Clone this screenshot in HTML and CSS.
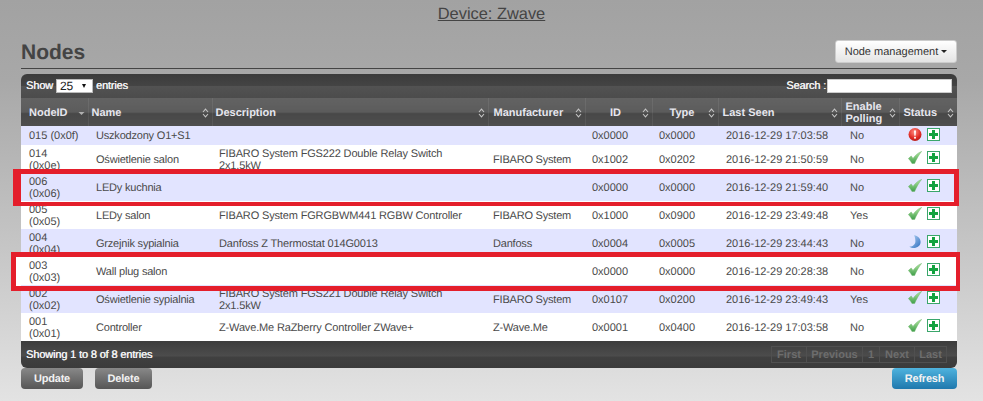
FILE: index.html
```html
<!DOCTYPE html>
<html lang="en">
<head>
  <meta charset="UTF-8" />
  <title>Device: Zwave</title>
  <link rel="stylesheet" href="styles.css">
</head>

<body>
  <svg class="sprites" width="0" height="0">
    <defs>
      <linearGradient id="g-check" x1="0" y1="0" x2="0" y2="1">
        <stop offset="0" stop-color="#b4e8a0" />
        <stop offset="1" stop-color="#3f9e4a" />
      </linearGradient>
      <radialGradient id="g-err" cx="0.45" cy="0.3" r="0.8">
        <stop offset="0" stop-color="#ff8a80" />
        <stop offset="0.6" stop-color="#e02b25" />
        <stop offset="1" stop-color="#a81512" />
      </radialGradient>
      <linearGradient id="g-moon" x1="0" y1="0" x2="1" y2="1">
        <stop offset="0" stop-color="#b9d6f5" />
        <stop offset="1" stop-color="#2f6fc0" />
      </linearGradient>
      <symbol id="i-check" viewBox="0 0 14 13">
        <path d="M0.4 7.5 L3.2 5 L5 7.4 C7 4.5 10 1.8 13.6 0.4 C11 3.5 8.5 8 6.6 12.6 L4 12.6 C3.2 10.8 2 9 0.4 7.5 Z" fill="url(#g-check)" stroke="#6db46d" stroke-width="0.5" />
      </symbol>
      <symbol id="i-plus" viewBox="0 0 13 13">
        <rect x="0.5" y="0.5" width="12" height="12" fill="#fff" stroke="#3aa66b" />
        <path d="M5 2 H8 V5 H11 V8 H8 V11 H5 V8 H2 V5 H5 Z" fill="#12a33f" />
      </symbol>
      <symbol id="i-error" viewBox="0 0 13 13">
        <circle cx="6.5" cy="6.5" r="6.5" fill="url(#g-err)" />
        <path d="M5.5 2.5 H7.5 L7.1 7.8 H5.9 Z" fill="#fff" />
        <rect x="5.6" y="8.8" width="1.8" height="1.8" fill="#fff" />
      </symbol>
      <symbol id="i-moon" viewBox="0 0 12 13">
        <path d="M5 0.3 C9 1 11.6 3.5 11.6 7 C11.6 10.5 8.5 13 4.5 13 C3 13 1.5 12.5 0.4 11.5 C3.5 11.8 6.4 9.5 6.4 6.5 C6.4 4 6 2 5 0.3 Z" fill="url(#g-moon)" />
      </symbol>
      <symbol id="i-sort" viewBox="0 0 7 10">
        <path d="M1 4 L3.5 1.2 L6 4 M1 6 L3.5 8.8 L6 6" fill="none" stroke="#c4c4c4" stroke-width="1.1" />
      </symbol>
      <symbol id="i-sort-down" viewBox="0 0 7 10">
        <path d="M0.5 4 H6.5 L3.5 7 Z" fill="#b0b0b0" />
      </symbol>
    </defs>
  </svg>

  <h2 class="device-title"><a href="#">Device: Zwave</a></h2>

  <div class="content">
    <div class="page-head">
      <h1>Nodes</h1>
      <button class="btn-menu">Node management <span class="caret"></span></button>
    </div>

    <div class="nodes-wrap">
      <div class="toolbar">
        <div class="length">
          Show
          <span class="select-wrap">
            <select>
              <option>25</option>
              <option>50</option>
              <option>100</option>
            </select>
          </span>
          entries
        </div>
        <label class="search">Search : <input type="text"></label>
      </div>

      <table class="nodes">
        <colgroup>
          <col class="c-node"><col class="c-name"><col class="c-desc"><col class="c-manu"><col class="c-id">
          <col class="c-type"><col class="c-seen"><col class="c-poll"><col class="c-status">
        </colgroup>
        <thead>
          <tr>
            <th class="first"><div class="th-in"><span>NodeID</span><svg class="sort"><use href="#i-sort-down" /></svg></div></th>
            <th class="tight"><div class="th-in"><span>Name</span><svg class="sort"><use href="#i-sort" /></svg></div></th>
            <th class="tight"><div class="th-in"><span>Description</span><svg class="sort"><use href="#i-sort" /></svg></div></th>
            <th class="manu"><div class="th-in"><span>Manufacturer</span><svg class="sort"><use href="#i-sort" /></svg></div></th>
            <th><div class="th-in"><span class="mid">ID</span><svg class="sort"><use href="#i-sort" /></svg></div></th>
            <th><div class="th-in"><span class="mid">Type</span><svg class="sort"><use href="#i-sort" /></svg></div></th>
            <th><div class="th-in"><span>Last Seen</span><svg class="sort"><use href="#i-sort" /></svg></div></th>
            <th><div class="th-in"><span>Enable Polling</span><svg class="sort"><use href="#i-sort" /></svg></div></th>
            <th><div class="th-in"><span>Status</span><svg class="sort"><use href="#i-sort" /></svg></div></th>
          </tr>
        </thead>
        <tbody>
          <tr class="odd short">
            <td class="one-line">015 (0x0f)</td><td class="name">Uszkodzony O1+S1</td><td class="desc"></td><td class="manu"></td><td>0x0000</td><td>0x0000</td>
            <td class="seen">2016-12-29 17:03:58</td><td class="poll">No</td>
            <td><div class="icons"><svg class="ic"><use href="#i-error" /></svg><svg class="plus"><use href="#i-plus" /></svg></div></td>
          </tr>
          <tr>
            <td>014 (0x0e)</td><td class="name">Oświetlenie salon</td><td class="desc">FIBARO System FGS222 Double Relay Switch 2x1.5kW</td><td class="manu">FIBARO System</td><td>0x1002</td><td>0x0202</td>
            <td class="seen">2016-12-29 21:50:59</td><td class="poll">No</td>
            <td><div class="icons"><svg class="ic"><use href="#i-check" /></svg><svg class="plus"><use href="#i-plus" /></svg></div></td>
          </tr>
          <tr class="odd">
            <td>006 (0x06)</td><td class="name">LEDy kuchnia</td><td class="desc"></td><td class="manu"></td><td>0x0000</td><td>0x0000</td>
            <td class="seen">2016-12-29 21:59:40</td><td class="poll">No</td>
            <td><div class="icons"><svg class="ic"><use href="#i-check" /></svg><svg class="plus"><use href="#i-plus" /></svg></div></td>
          </tr>
          <tr>
            <td>005 (0x05)</td><td class="name">LEDy salon</td><td class="desc">FIBARO System FGRGBWM441 RGBW Controller</td><td class="manu">FIBARO System</td><td>0x1000</td><td>0x0900</td>
            <td class="seen">2016-12-29 23:49:48</td><td class="poll">Yes</td>
            <td><div class="icons"><svg class="ic"><use href="#i-check" /></svg><svg class="plus"><use href="#i-plus" /></svg></div></td>
          </tr>
          <tr class="odd">
            <td>004 (0x04)</td><td class="name">Grzejnik sypialnia</td><td class="desc">Danfoss Z Thermostat 014G0013</td><td class="manu">Danfoss</td><td>0x0004</td><td>0x0005</td>
            <td class="seen">2016-12-29 23:44:43</td><td class="poll">No</td>
            <td><div class="icons"><svg class="ic"><use href="#i-moon" /></svg><svg class="plus"><use href="#i-plus" /></svg></div></td>
          </tr>
          <tr>
            <td>003 (0x03)</td><td class="name">Wall plug salon</td><td class="desc"></td><td class="manu"></td><td>0x0000</td><td>0x0000</td>
            <td class="seen">2016-12-29 20:28:38</td><td class="poll">No</td>
            <td><div class="icons"><svg class="ic"><use href="#i-check" /></svg><svg class="plus"><use href="#i-plus" /></svg></div></td>
          </tr>
          <tr class="odd">
            <td>002 (0x02)</td><td class="name">Oświetlenie sypialnia</td><td class="desc">FIBARO System FGS221 Double Relay Switch 2x1.5kW</td><td class="manu">FIBARO System</td><td>0x0107</td><td>0x0200</td>
            <td class="seen">2016-12-29 23:49:43</td><td class="poll">Yes</td>
            <td><div class="icons"><svg class="ic"><use href="#i-check" /></svg><svg class="plus"><use href="#i-plus" /></svg></div></td>
          </tr>
          <tr>
            <td>001 (0x01)</td><td class="name">Controller</td><td class="desc">Z-Wave.Me RaZberry Controller ZWave+</td><td class="manu">Z-Wave.Me</td><td>0x0001</td><td>0x0400</td>
            <td class="seen">2016-12-29 17:03:58</td><td class="poll">No</td>
            <td><div class="icons"><svg class="ic"><use href="#i-check" /></svg><svg class="plus"><use href="#i-plus" /></svg></div></td>
          </tr>
        </tbody>
      </table>

      <div class="table-foot">
        <div class="info">Showing 1 to 8 of 8 entries</div>
        <div class="pager">
          <a class="w-first">First</a><a class="w-prev">Previous</a><a class="w-one">1</a><a class="w-next">Next</a><a class="w-last">Last</a>
        </div>
      </div>

      <!-- hand drawn marks that sit on top of the screenshot -->
      <div class="mark mark-one"></div>
      <div class="mark mark-two"></div>
    </div>

    <div class="actions">
      <button class="btn btn-update">Update</button>
      <button class="btn btn-delete">Delete</button>
      <button class="btn btn-refresh">Refresh</button>
    </div>
  </div>
</body>
</html>
```

FILE: styles.css
```css
* {
  box-sizing: border-box;
  margin: 0;
  padding: 0;
  font-family: "Liberation Sans", Arial, sans-serif;
  text-rendering: geometricPrecision;
}

html, body {
  height: 100%;
}

body {
  background: linear-gradient(to bottom, #a2a2a2 0%, #a8a8a8 20%, #c6c6c6 62%, #e3e3e3 100%);
  overflow: hidden;
}

.sprites {
  position: absolute;
}

.device-title {
  font-size: 16.4px;
  font-weight: normal;
  line-height: 21px;
  text-align: center;
  padding-top: 4px;
}
.device-title a {
  color: #444;
  text-decoration: underline;
}

.content {
  padding-left: 21px;
  padding-right: 26px;
}

.page-head {
  display: flex;
  justify-content: space-between;
  align-items: flex-end;
  height: 44px;
  padding-bottom: 5px;
  border-bottom: 1px solid #444;
  margin-bottom: 5px;
}
.page-head h1 {
  font-size: 21px;
  line-height: 24px;
  font-weight: bold;
  color: #444;
  margin-bottom: -2px;
}
.btn-menu {
  width: 122px;
  height: 23px;
  font-size: 11px;
  color: #333;
  background: linear-gradient(to bottom, #fff, #e4e4e4);
  border: 1px solid #ccc;
  border-radius: 3px;
}
.caret {
  display: inline-block;
  width: 0;
  height: 0;
  border-left: 3px solid transparent;
  border-right: 3px solid transparent;
  border-top: 3px solid #222;
  vertical-align: 2px;
}

.nodes-wrap {
  position: relative;
}

.toolbar {
  display: flex;
  justify-content: space-between;
  align-items: center;
  height: 24px;
  padding-left: 5px;
  padding-right: 5px;
  background: linear-gradient(to bottom, #3b3b3b 0%, #444 50%, #525252 52%, #4c4c4c 100%);
  border-radius: 6px 6px 0 0;
  color: #f2f2f2;
  font-size: 11px;
  letter-spacing: -0.15px;
  text-shadow: 0.3px 0 0 #f2f2f2;
}
.length {
  display: flex;
  align-items: center;
  gap: 3px;
}
.select-wrap {
  position: relative;
  display: block;
  width: 37px;
  height: 14px;
  background: #fff;
  border: 1px solid #bbb;
}
.select-wrap::after {
  content: "";
  position: absolute;
  right: 6px;
  top: 4px;
  border-left: 2.5px solid transparent;
  border-right: 2.5px solid transparent;
  border-top: 4px solid #111;
}
.select-wrap select {
  display: block;
  appearance: none;
  width: 100%;
  height: 12px;
  border: none;
  background: transparent;
  padding-left: 3px;
  font-size: 12px;
  line-height: 12px;
  color: #222;
  text-shadow: none;
}
.search {
  display: flex;
  align-items: center;
  gap: 1px;
}
.search input {
  width: 125px;
  height: 14px;
  border: 1px solid #ccc;
  background: #fff;
}

.nodes {
  width: 936px;
  table-layout: fixed;
  border-collapse: collapse;
  font-size: 11px;
  line-height: 12px;
  color: #4a4a4a;
}
.c-node { width: 67px; }
.c-name { width: 124px; }
.c-desc { width: 276px; }
.c-manu { width: 97px; }
.c-id { width: 67px; }
.c-type { width: 66px; }
.c-seen { width: 123px; }
.c-poll { width: 58px; }
.c-status { width: 58px; }

.nodes th {
  height: 28px;
  padding: 1px 3px 0 4px;
  text-align: left;
  color: #e6e6ee;
  font-size: 11px;
  font-weight: bold;
  background: linear-gradient(to bottom, #626262 0%, #5c5c5c 50%, #484848 56%, #4e4e4e 100%);
  border-right: 1px solid rgba(255, 255, 255, 0.07);
}
.nodes th:last-child {
  border-right: none;
}
.nodes th.first {
  padding-left: 8px;
}
.nodes th.tight {
  padding-left: 3px;
}
.nodes th.manu {
  padding-left: 5px;
}
.th-in {
  display: flex;
  justify-content: space-between;
  align-items: center;
}
.th-in .mid {
  flex: 1;
  text-align: center;
}
.sort {
  width: 7px;
  height: 10px;
  flex: none;
}

.nodes td {
  height: 28px;
  padding: 2px 4px 0 7px;
  background: #fff;
  vertical-align: middle;
}
.nodes td:first-child {
  padding-left: 8px;
  padding-right: 14px;
}
.nodes td.name {
  padding-left: 8px;
  letter-spacing: -0.2px;
}
.nodes td.desc {
  letter-spacing: -0.15px;
}
.nodes td.one-line {
  padding-right: 0;
  white-space: nowrap;
}
.nodes tr.odd td {
  background: #e2e4ff;
}
.nodes tr.short td {
  height: 19px;
  padding-top: 0;
}
.nodes td.manu {
  padding-left: 5px;
  letter-spacing: -0.2px;
}
.nodes td.seen {
  padding-left: 8px;
}
.nodes td.poll {
  padding-left: 9px;
}

.icons {
  display: flex;
  align-items: center;
  gap: 5px;
  padding-left: 2px;
  margin-top: -6px;
}
.short .icons {
  margin-top: -2px;
}
.ic {
  width: 14px;
  height: 13px;
}
.plus {
  width: 13px;
  height: 13px;
}

.table-foot {
  display: flex;
  justify-content: space-between;
  align-items: center;
  height: 27px;
  padding-left: 5px;
  padding-right: 10px;
  background: linear-gradient(to bottom, #3c3c3c 0%, #4c4c4c 55%, #404040 60%, #3b3b3b 100%);
  border-radius: 0 0 6px 6px;
  color: #f2f2f2;
  font-size: 11px;
}
.info {
  letter-spacing: -0.15px;
  text-shadow: 0.3px 0 0 #f2f2f2;
}
.pager {
  display: flex;
  height: 17px;
  font-weight: bold;
}
.pager a {
  display: block;
  text-align: center;
  line-height: 17px;
  color: #6d6d6d;
  border: 1px solid #505050;
  border-right: none;
}
.pager a:last-child {
  border-right: 1px solid #505050;
}
.w-first { width: 35px; }
.w-prev { width: 56px; }
.w-one { width: 17px; }
.w-next { width: 35px; }
.w-last { width: 33px; }

.mark {
  position: absolute;
  border-style: solid;
  border-color: #e41e2b;
  pointer-events: none;
}
.mark-one {
  left: -8px;
  top: 95px;
  width: 946px;
  height: 37px;
  border-width: 5px 5px 4px 8px;
}
.mark-two {
  left: -10px;
  top: 178px;
  width: 949px;
  height: 39px;
  border-width: 5px 4px 5px 5px;
  box-shadow: inset 5px 0 0 #fff;
}

.actions {
  display: flex;
  gap: 12px;
}
.btn {
  height: 21px;
  border: none;
  border-radius: 4px;
  color: #f2f2f2;
  font-size: 11px;
  font-weight: bold;
  letter-spacing: -0.2px;
  background: linear-gradient(to bottom, #888, #565656);
}
.btn-update { width: 62px; }
.btn-delete { width: 57px; }
.btn-refresh {
  width: 65px;
  margin-left: auto;
  background: linear-gradient(to bottom, #4fb3de, #1f78ad);
}
```
